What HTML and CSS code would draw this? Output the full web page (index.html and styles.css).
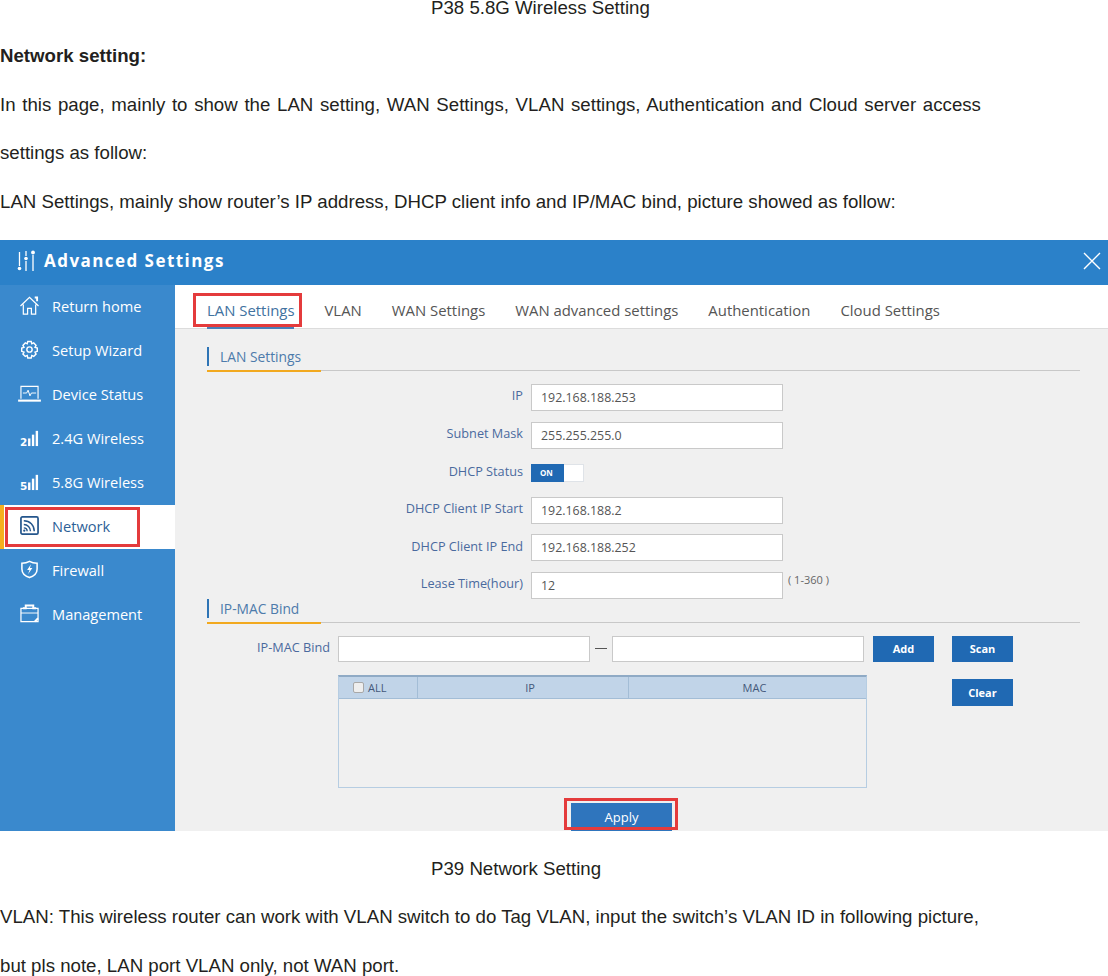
FILE: index.html
```html
<!DOCTYPE html>
<html lang="en">
<head>
<meta charset="utf-8">
<title>Network Setting</title>
<link rel="stylesheet" href="styles.css">
</head>
<body>
<p class="caption caption-first">P38 5.8G Wireless Setting</p>
<p class="line strong">Network setting:</p>
<p class="line line-spread">In this page, mainly to show the LAN setting, WAN Settings, VLAN settings, Authentication and Cloud server access</p>
<p class="line">settings as follow:</p>
<p class="line line-before-shot">LAN Settings, mainly show router’s IP address, DHCP client info and IP/MAC bind, picture showed as follow:</p>

<section class="shot">
  <header class="topbar">
    <svg class="top-icon" viewBox="0 0 20 22" width="20" height="22" fill="none" stroke="#fff" stroke-width="1.3"><path d="M2.500 2v14M9 1v5M9 11v10M16 5v16"/><circle cx="2.500" cy="18.500" r="1.800" fill="#fff" stroke="none"/><circle cx="9" cy="8.500" r="1.800" fill="#fff" stroke="none"/><circle cx="16" cy="2.500" r="1.900" fill="#fff" stroke="none"/></svg>
    <h1 class="top-title">Advanced Settings</h1>
    <svg class="close" viewBox="0 0 18 18" width="18" height="18" stroke="#fff" stroke-width="1.400"><path d="M1 1l16 16M17 1L1 17"/></svg>
  </header>

  <nav class="side">
    <a class="side-item"><svg class="side-icon" viewBox="0 0 20 20" fill="none" stroke="#fff" stroke-width="1.300"><path d="M.5 10.500L10 1.500l9.500 9M3.500 9v10h4.500v-6h4v6h4.500V9"/><path d="M15.500 1.500h2.500v4" stroke-width="2"/></svg>Return home</a>
    <a class="side-item"><svg class="side-icon" viewBox="0 0 20 20" fill="none" stroke="#fff" stroke-width="1.500"><path d="M8.200 1.500h3.600l.6 2.500 2-.9 2.500 2.500-1.100 2.100 2.400.8v3.400l-2.400.8 1.100 2.100-2.500 2.500-2-1-.6 2.600H8.200l-.6-2.600-2 1-2.500-2.500 1.100-2.100-2.400-.8V8.500l2.400-.8-1.100-2.100 2.500-2.500 2 .9z"/><circle cx="10" cy="10" r="2.800"/></svg>Setup Wizard</a>
    <a class="side-item"><svg class="side-icon wide" viewBox="0 0 24 20" fill="none" stroke="#fff" stroke-width="1.200"><path d="M3 15.500V2.500h18v13"/><path d="M0 17.500h24" stroke-width="2.200"/><path d="M5 9.500h4l1.500-3 2 6 1.500-3h5" stroke-width="1"/></svg>Device Status</a>
    <a class="side-item"><svg class="side-icon" viewBox="0 0 20 20" fill="#fff"><text x="0" y="19" class="sig-num">2</text><rect x="8.500" y="11" width="2.500" height="8"/><rect x="12.500" y="7" width="2.500" height="12"/><rect x="16.500" y="3" width="2.500" height="16"/></svg>2.4G Wireless</a>
    <a class="side-item"><svg class="side-icon" viewBox="0 0 20 20" fill="#fff"><text x="0" y="19" class="sig-num">5</text><rect x="8.500" y="11" width="2.500" height="8"/><rect x="12.500" y="7" width="2.500" height="12"/><rect x="16.500" y="3" width="2.500" height="16"/></svg>5.8G Wireless</a>
    <a class="side-item side-active"><svg class="side-icon" viewBox="0 0 20 20" fill="none" stroke="#24568c" stroke-width="1.500"><rect x="1" y="1" width="18" height="18" rx="1.500" stroke-width="1.800"/><path d="M4 9c4 0 7 3 7 7M4 5c6.500 0 11 4.500 11 11M4 12.500c2 0 3.500 1.500 3.500 3.500"/><circle cx="4.500" cy="15.500" r="1.200" fill="#24568c" stroke="none"/></svg>Network</a>
    <a class="side-item"><svg class="side-icon" viewBox="0 0 20 20" fill="none" stroke="#fff" stroke-width="1.600"><path d="M10 1.500c2.500 1.500 5 2 8 2v6c0 4.500-3.500 7.500-8 9-4.500-1.500-8-4.500-8-9v-6c3 0 5.500-.5 8-2z"/><path d="M11.500 4.500L7.500 10.500h2.500l-1.500 4.500 4.500-6.500h-2.500z" fill="#fff" stroke="none"/></svg>Firewall</a>
    <a class="side-item"><svg class="side-icon" viewBox="0 0 20 20" fill="none" stroke="#fff" stroke-width="1.300"><path d="M1 4.500h18v14H1z"/><path d="M1 9.500h18" stroke-width="1"/><path d="M6 4V1.500h8V4" stroke-width="2"/><path d="M3 4.500h4M13 4.500h4M15.500 18.500L19 15" stroke-width="2"/></svg>Management</a>
  </nav>

  <main class="main">
    <div class="tabs">
      <a class="tab tab-active">LAN Settings</a>
      <a class="tab">VLAN</a>
      <a class="tab">WAN Settings</a>
      <a class="tab">WAN advanced settings</a>
      <a class="tab">Authentication</a>
      <a class="tab">Cloud Settings</a>
    </div>

    <div class="content">
      <h2 class="section-title"><span class="section-name">LAN Settings</span></h2>

      <div class="form">
        <label class="label">IP</label><div class="input">192.168.188.253</div><span></span>
        <label class="label">Subnet Mask</label><div class="input">255.255.255.0</div><span></span>
        <label class="label">DHCP Status</label><div class="toggle"><span class="toggle-on">ON</span></div><span></span>
        <label class="label">DHCP Client IP Start</label><div class="input">192.168.188.2</div><span></span>
        <label class="label">DHCP Client IP End</label><div class="input">192.168.188.252</div><span></span>
        <label class="label">Lease Time(hour)</label><div class="input">12</div><span class="hint">( 1-360 )</span>
      </div>

      <h2 class="section-title"><span class="section-name">IP-MAC Bind</span></h2>

      <div class="bind-row">
        <label class="label bind-label">IP-MAC Bind</label>
        <div class="input bind-input"></div>
        <span class="dash"></span>
        <div class="input bind-input"></div>
        <button class="btn btn-add">Add</button>
        <button class="btn btn-scan">Scan</button>
      </div>

      <div class="table-row">
        <div class="table">
          <div class="thead">
            <div class="th th-all"><span class="check"></span>ALL</div>
            <div class="th th-ip">IP</div>
            <div class="th th-mac">MAC</div>
          </div>
        </div>
        <button class="btn btn-clear">Clear</button>
      </div>

      <div class="apply-row"><button class="btn btn-apply">Apply</button></div>
    </div>
  </main>

  <span class="mark mark-tab"></span>
  <span class="mark mark-net"></span>
  <span class="mark mark-apply"></span>
</section>

<p class="caption caption-second">P39 Network Setting</p>
<p class="line">VLAN: This wireless router can work with VLAN switch to do Tag VLAN, input the switch’s VLAN ID in following picture,</p>
<p class="line">but pls note, LAN port VLAN only, not WAN port.</p>
</body>
</html>
```

FILE: styles.css
```css
html, body { margin: 0; padding: 0; background: #fff; }
body {
  width: 1108px;
  height: 976px;
  overflow: hidden;
  font-family: "Liberation Sans", Arial, sans-serif;
  font-size: 18.67px;
  color: #231f20;
}
p { margin: 0; }
.line { height: 48.6px; line-height: 48.6px; white-space: nowrap; }
.line-spread { word-spacing: 1.5px; }
.line-before-shot { height: 62.2px; }
.strong { font-weight: 700; }
.caption { padding-left: 431px; white-space: nowrap; }
.caption-first { height: 32px; line-height: 16px; }
.caption-second { height: 62px; line-height: 76px; }

.shot {
  position: relative;
  display: grid;
  grid-template-columns: 175px 1fr;
  grid-template-rows: 45px 546px;
  height: 591px;
  font-family: "Open Sans", "Noto Sans", sans-serif;
  overflow: hidden;
}
.topbar {
  grid-column: 1 / 3;
  background: #2b81c9;
  display: flex;
  align-items: center;
  padding: 0 7px 3px 17px;
  box-sizing: border-box;
  color: #fff;
}
.top-icon { flex: none; margin-right: 7px; }
.top-title { margin: 0; font-size: 17px; font-weight: 700; letter-spacing: 1.45px; flex: 1; }
.close { flex: none; }

.side { background: #3a89cd; display: flex; flex-direction: column; }
.side-item {
  height: 44px;
  display: flex;
  align-items: center;
  color: #fff;
  font-size: 14.6px;
  padding: 0 0 2px 20px;
  gap: 13px;
  box-sizing: border-box;
  white-space: nowrap;
}
.side-icon { width: 19px; height: 19px; flex: none; }
.side-icon.wide { width: 23px; margin-left: -2px; margin-right: -2px; }
.sig-num { font: 700 11px "DejaVu Sans", sans-serif; }
.side-active { background: #fff; color: #2d5f97; border-left: 4px solid #f6b01e; padding-left: 16px; }

.main { background: #f0f0f0; display: flex; flex-direction: column; overflow: hidden; }
.tabs {
  height: 44px;
  flex: none;
  box-sizing: border-box;
  background: #fff;
  border-bottom: 1px solid #dcdcdc;
  display: flex;
  align-items: center;
  gap: 30px;
  padding: 8px 0 0 32px;
  font-size: 14.9px;
  color: #555;
  white-space: nowrap;
}
.tab { position: relative; }
.tab-active { color: #41729f; }
.tab-active::after {
  content: "";
  position: absolute;
  left: 0;
  right: 0;
  bottom: -9px;
  height: 2px;
  background: #4a7fb8;
}
.content { padding: 18px 28px 0 32px; }
.section-title {
  margin: 0;
  height: 23px;
  position: relative;
  font-size: 13.8px;
  font-weight: 400;
  color: #4d7bab;
  border-bottom: 1px solid #c8c8c8;
}
.section-title::after {
  content: "";
  position: absolute;
  left: 0;
  bottom: -2px;
  width: 114px;
  height: 2px;
  background: #f2a91f;
}
.section-name {
  display: block;
  border-left: 2px solid #2e74b5;
  padding-left: 11px;
  height: 19px;
  line-height: 20px;
}
.form {
  display: grid;
  grid-template-columns: 316px 252px 1fr;
  column-gap: 8px;
  align-items: center;
  grid-auto-rows: 27px;
  row-gap: 10.6px;
  margin-top: 13px;
}
.label { text-align: right; color: #4a6a9e; font-size: 12.7px; white-space: nowrap; margin-top: -4px; }
.input {
  background: #fff;
  border: 1px solid #c9c9c9;
  box-sizing: border-box;
  height: 27px;
  line-height: 25px;
  padding-left: 9px;
  color: #555;
  font-size: 12.4px;
}
.toggle {
  width: 53px;
  height: 18px;
  box-sizing: border-box;
  background: #fff;
  border: 1px solid #dfe3e8;
}
.toggle-on {
  display: block;
  width: 33px;
  height: 18px;
  margin: -1px 0 0 -1px;
  background: #2069b3;
  color: #fff;
  font-size: 8px;
  font-weight: 700;
  line-height: 18px;
  padding-left: 9px;
  box-sizing: border-box;
}
.hint { font-size: 11px; color: #666; margin-left: -3px; margin-top: -12px; white-space: nowrap; }
.bind-row {
  display: flex;
  align-items: center;
  margin-top: 13px;
  height: 26px;
}
.bind-label { width: 123px; flex: none; margin-right: 8px; }
.bind-input { width: 252px; height: 26px; flex: none; }
.dash { width: 12px; height: 1px; background: #555; margin: 0 5px; flex: none; }
.btn {
  border: 0;
  padding: 0;
  margin: 0;
  background: #2069b3;
  color: #fff;
  font-family: inherit;
  font-size: 11px;
  font-weight: 700;
  height: 26px;
  width: 61px;
  flex: none;
}
.btn-add { margin-left: 9px; }
.btn-scan { margin-left: 18px; }
.table-row { display: flex; align-items: flex-start; margin-top: 13px; }
.table {
  margin-left: 131px;
  width: 529px;
  height: 113px;
  box-sizing: border-box;
  border: 1px solid #b6cde2;
  border-top: 2px solid #8faac5;
  flex: none;
}
.thead {
  height: 22px;
  background: #c1d4e8;
  border-bottom: 1px solid #a3bdd6;
  display: flex;
  font-size: 11px;
  color: #44587a;
  line-height: 21px;
  box-sizing: border-box;
}
.th { text-align: center; box-sizing: border-box; }
.th-all { width: 79px; border-right: 1px solid #a3bdd6; text-align: left; padding-left: 14px; display: flex; align-items: center; gap: 4px; }
.th-ip { width: 211px; border-right: 1px solid #a3bdd6; padding-left: 14px; }
.th-mac { flex: 1; padding-left: 14px; }
.check { width: 9px; height: 9px; background: #eee; border: 1px solid #a8a8a8; border-radius: 2px; display: block; flex: none; }
.btn-clear { margin: 4px 0 0 85px; height: 27px; }
.apply-row { margin: 15px 0 0 364px; }
.btn-apply { width: 101px; height: 28px; font-size: 13px; font-weight: 400; background: #2f75bd; display: block; }

.mark { position: absolute; box-sizing: border-box; border: 3px solid #e43b3c; }
.mark-tab { left: 193px; top: 53px; width: 109px; height: 34px; }
.mark-net { left: 5px; top: 267px; width: 135px; height: 40px; }
.mark-apply { left: 564px; top: 558px; width: 114px; height: 32px; }
```
